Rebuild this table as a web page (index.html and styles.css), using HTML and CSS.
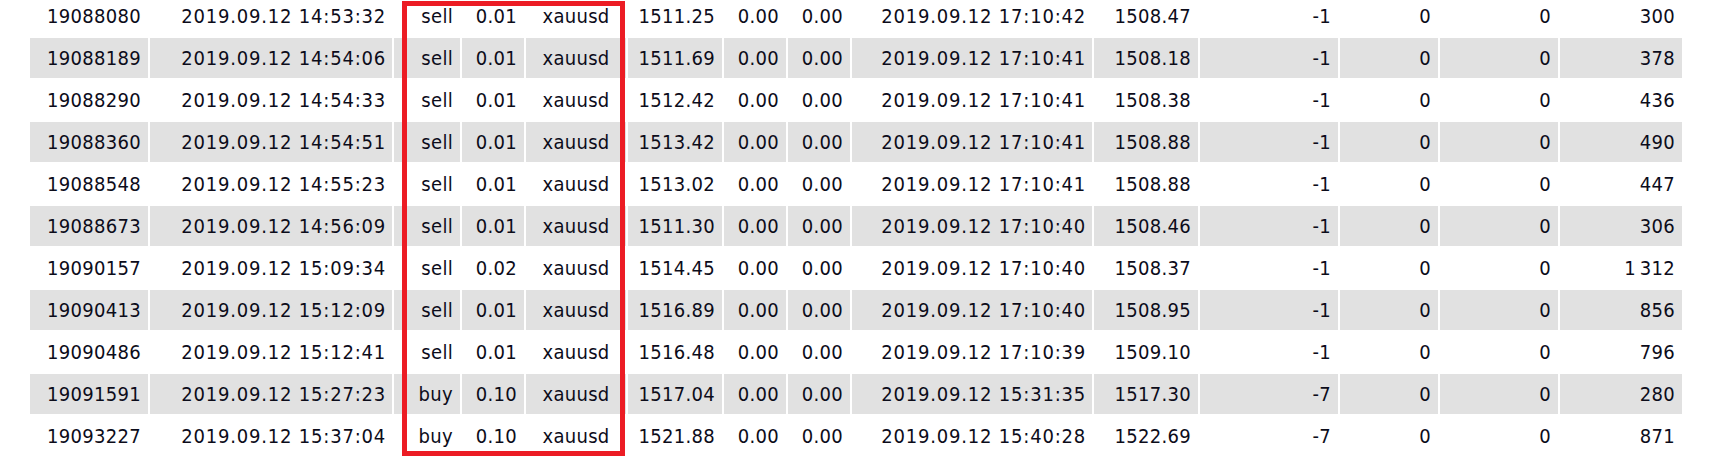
FILE: index.html
```html
<!DOCTYPE html>
<html lang="en">
<head>
  <meta charset="UTF-8" />
  <title>Orders</title>
  <link rel="stylesheet" href="styles.css">
</head>
<body>

<div class="report">
  <table class="orders">
    <colgroup>
      <col class="c-ticket"><col class="c-time"><col class="c-type"><col class="c-size"><col class="c-symbol">
      <col class="c-price"><col class="c-sl"><col class="c-tp"><col class="c-time2"><col class="c-price2">
      <col class="c-comm"><col class="c-tax"><col class="c-swap"><col class="c-profit">
    </colgroup>
    <tbody id="rows"></tbody>
  </table>
  <!-- recuadro sobre tipo / volumen / simbolo -->
  <div class="marca"></div>
</div>

<script>
const ordenes = [
  ["19088080", "2019.09.12 14:53:32", "sell", "0.01", "1511.25", "2019.09.12 17:10:42", "1508.47", "-1", "300"],
  ["19088189", "2019.09.12 14:54:06", "sell", "0.01", "1511.69", "2019.09.12 17:10:41", "1508.18", "-1", "378"],
  ["19088290", "2019.09.12 14:54:33", "sell", "0.01", "1512.42", "2019.09.12 17:10:41", "1508.38", "-1", "436"],
  ["19088360", "2019.09.12 14:54:51", "sell", "0.01", "1513.42", "2019.09.12 17:10:41", "1508.88", "-1", "490"],
  ["19088548", "2019.09.12 14:55:23", "sell", "0.01", "1513.02", "2019.09.12 17:10:41", "1508.88", "-1", "447"],
  ["19088673", "2019.09.12 14:56:09", "sell", "0.01", "1511.30", "2019.09.12 17:10:40", "1508.46", "-1", "306"],
  ["19090157", "2019.09.12 15:09:34", "sell", "0.02", "1514.45", "2019.09.12 17:10:40", "1508.37", "-1", "1\u2009312"],
  ["19090413", "2019.09.12 15:12:09", "sell", "0.01", "1516.89", "2019.09.12 17:10:40", "1508.95", "-1", "856"],
  ["19090486", "2019.09.12 15:12:41", "sell", "0.01", "1516.48", "2019.09.12 17:10:39", "1509.10", "-1", "796"],
  ["19091591", "2019.09.12 15:27:23", "buy", "0.10", "1517.04", "2019.09.12 15:31:35", "1517.30", "-7", "280"],
  ["19093227", "2019.09.12 15:37:04", "buy", "0.10", "1521.88", "2019.09.12 15:40:28", "1522.69", "-7", "871"]
];

const cuerpo = document.getElementById("rows");
ordenes.forEach((o, i) => {
  const celdas = [o[0], o[1], o[2], o[3], "xauusd", o[4], "0.00", "0.00", o[5], o[6], o[7], "0", "0", o[8]];
  const tr = document.createElement("tr");
  if (i % 2 === 1) tr.className = "gris";
  celdas.forEach((txt, j) => {
    const td = document.createElement("td");
    if (j === 4) td.className = "simbolo";
    if (j === 1 || j === 8) td.className = "fecha";
    td.textContent = txt;
    tr.appendChild(td);
  });
  cuerpo.appendChild(tr);
});
</script>

</body>
</html>
```

FILE: styles.css
```css
* { margin: 0; padding: 0; box-sizing: border-box; }

body {
  background: #fff;
  overflow: hidden;
  font-family: "DejaVu Sans", Verdana, sans-serif;
  font-stretch: condensed;
  color: #0c0c1a;
}

.report {
  position: relative;
  display: flow-root;
  padding-left: 28px;
  height: 458px;
}

.orders {
  table-layout: fixed;
  width: 1656px;
  border-collapse: separate;
  border-spacing: 2px;
  margin-top: -6px;
  font-size: 20px;
  letter-spacing: 0.3px;
}

.orders td {
  height: 40px;
  padding: 0 7px;
  text-align: right;
  white-space: nowrap;
}

.orders td.simbolo { text-align: center; }
.orders td.fecha { letter-spacing: 0.8px; padding-right: 6px; }

.orders tr.gris td { background: #e1e1e1; }

.c-ticket { width: 118px; }
.c-time   { width: 242px; }
.c-type   { width: 66px; }
.c-size   { width: 62px; }
.c-symbol { width: 100px; }
.c-price  { width: 94px; }
.c-sl     { width: 62px; }
.c-tp     { width: 62px; }
.c-time2  { width: 240px; }
.c-price2 { width: 104px; }
.c-comm   { width: 138px; }
.c-tax    { width: 98px; }
.c-swap   { width: 118px; }
.c-profit { width: 122px; }

/* recuadro rojo */
.marca {
  position: absolute;
  left: 402px;
  top: 1px;
  width: 223px;
  height: 455px;
  border: 5px solid #ec1c24;
}
```
